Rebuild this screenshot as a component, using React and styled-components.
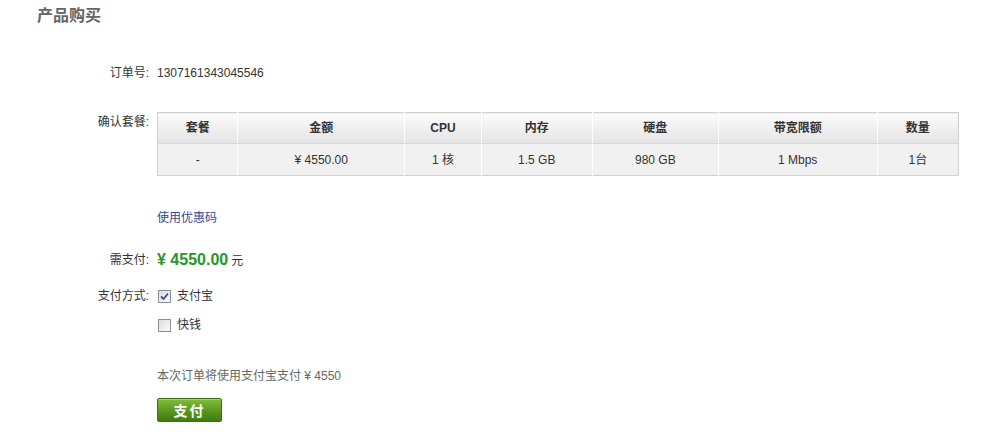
import React from "react";
import styled, { createGlobalStyle } from "styled-components";

const Global = createGlobalStyle`
  html, body { margin: 0; padding: 0; background: #fff; }
  body { font-family: "Liberation Sans", "Noto Sans CJK SC", sans-serif; font-size: 12px; color: #333; }
`;

const Page = styled.div`
  width: 995px;
  height: 432px;
  overflow: hidden;
  padding-top: 5px;
  box-sizing: border-box;
`;

const Title = styled.h1`
  margin: 0 0 0 37px;
  font-size: 16px;
  line-height: 22px;
  font-weight: bold;
  color: #666;
`;

const Form = styled.div`
  display: flex;
  flex-direction: column;
`;

const Row = styled.div`
  display: flex;
  align-items: ${(p) => p.$align || "center"};
  margin-top: ${(p) => p.$mt || 0}px;
`;

const Label = styled.div`
  width: 149px;
  flex: none;
  text-align: right;
  line-height: ${(p) => p.$lh || 18}px;
  color: #333;
`;

const Content = styled.div`
  margin-left: 8px;
  display: flex;
  flex-direction: ${(p) => (p.$inline ? "row" : "column")};
  align-items: ${(p) => (p.$inline ? "baseline" : "stretch")};
  line-height: 18px;
`;

const OrderNo = styled.span`
  color: #333;
`;

const Table = styled.table`
  border-collapse: collapse;
  width: 802px;
  border: 1px solid #d0d0d0;
  text-align: center;
`;

const Th = styled.th`
  height: 30px;
  padding: 0;
  font-weight: bold;
  font-size: 12px;
  color: #333;
  background: linear-gradient(#fbfbfb, #e4e4e4);
  border-right: 1px solid #fff;
  border-bottom: 1px solid #d8d8d8;
  width: ${(p) => p.$w}px;
  &:last-child { border-right: none; }
`;

const Td = styled.td`
  height: 31px;
  padding: 0;
  background: #f1f1f1;
  color: #333;
  font-size: 12px;
  border-right: 1px solid #fff;
  &:last-child { border-right: none; }
`;

const Link = styled.a`
  color: #34489a;
  text-decoration: none;
  line-height: 18px;
`;

const Price = styled.span`
  color: #249a24;
  font-weight: bold;
  font-size: 16px;
  line-height: 24px;
`;

const Unit = styled.span`
  color: #333;
  margin-left: 3px;
`;

const Option = styled.label`
  display: flex;
  align-items: center;
  line-height: 18px;
  margin-bottom: ${(p) => p.$mb || 0}px;
`;

const Box = styled.span`
  width: 11px;
  height: 11px;
  border: 1px solid #8e8f8f;
  background: linear-gradient(135deg, #dcdcdc, #fbfbfb);
  margin-right: 6px;
  margin-left: 1px;
  display: inline-flex;
  align-items: center;
  justify-content: center;
`;

const Notice = styled.div`
  color: #666;
  line-height: 18px;
`;

const PayButton = styled.button`
  width: 65px;
  height: 24px;
  border: 1px solid #3d6f14;
  border-radius: 2px;
  background: linear-gradient(#82bd3a, #5d9a1f 50%, #3e7c0d);
  color: #fff;
  font-weight: bold;
  font-size: 14px;
  font-family: "Liberation Sans", "Noto Sans CJK SC", sans-serif;
  letter-spacing: 2px;
  padding: 0;
  cursor: pointer;
  box-shadow: inset 0 1px 0 rgba(255,255,255,0.3);
`;

const cols = [
  ["套餐", 80, "-"],
  ["金额", 167, "¥ 4550.00"],
  ["CPU", 76, "1 核"],
  ["内存", 111, "1.5 GB"],
  ["硬盘", 126, "980 GB"],
  ["带宽限额", 159, "1 Mbps"],
  ["数量", 81, "1台"],
];

const Check = ({ checked }) => (
  <Box>
    {checked && (
      <svg width="9" height="9" viewBox="0 0 9 9">
        <path d="M1 4.5 L3.5 7 L8 1.5" fill="none" stroke="#3a4f9e" strokeWidth="1.8" />
      </svg>
    )}
  </Box>
);

export default function App() {
  return (
    <Page>
      <Global />
      <Title>产品购买</Title>
      <Form>
        <Row $mt={37}>
          <Label>订单号:</Label>
          <Content>
            <OrderNo>1307161343045546</OrderNo>
          </Content>
        </Row>
        <Row $mt={30} $align="flex-start">
          <Label $lh={20}>确认套餐:</Label>
          <Content>
            <Table>
              <thead>
                <tr>
                  {cols.map(([h, w]) => (
                    <Th key={h} $w={w}>{h}</Th>
                  ))}
                </tr>
              </thead>
              <tbody>
                <tr>
                  {cols.map(([h, , v]) => (
                    <Td key={h}>{v}</Td>
                  ))}
                </tr>
              </tbody>
            </Table>
          </Content>
        </Row>
        <Row $mt={33}>
          <Label />
          <Content>
            <Link href="#">使用优惠码</Link>
          </Content>
        </Row>
        <Row $mt={21}>
          <Label>需支付:</Label>
          <Content $inline>
            <Price>¥ 4550.00</Price>
            <Unit>元</Unit>
          </Content>
        </Row>
        <Row $mt={15} $align="flex-start">
          <Label>支付方式:</Label>
          <Content>
            <Option $mb={11}>
              <Check checked />
              支付宝
            </Option>
            <Option>
              <Check />
              快钱
            </Option>
          </Content>
        </Row>
        <Row $mt={33}>
          <Label />
          <Content>
            <Notice>本次订单将使用支付宝支付 ¥ 4550</Notice>
          </Content>
        </Row>
        <Row $mt={13}>
          <Label />
          <Content>
            <PayButton>支付</PayButton>
          </Content>
        </Row>
      </Form>
    </Page>
  );
}
